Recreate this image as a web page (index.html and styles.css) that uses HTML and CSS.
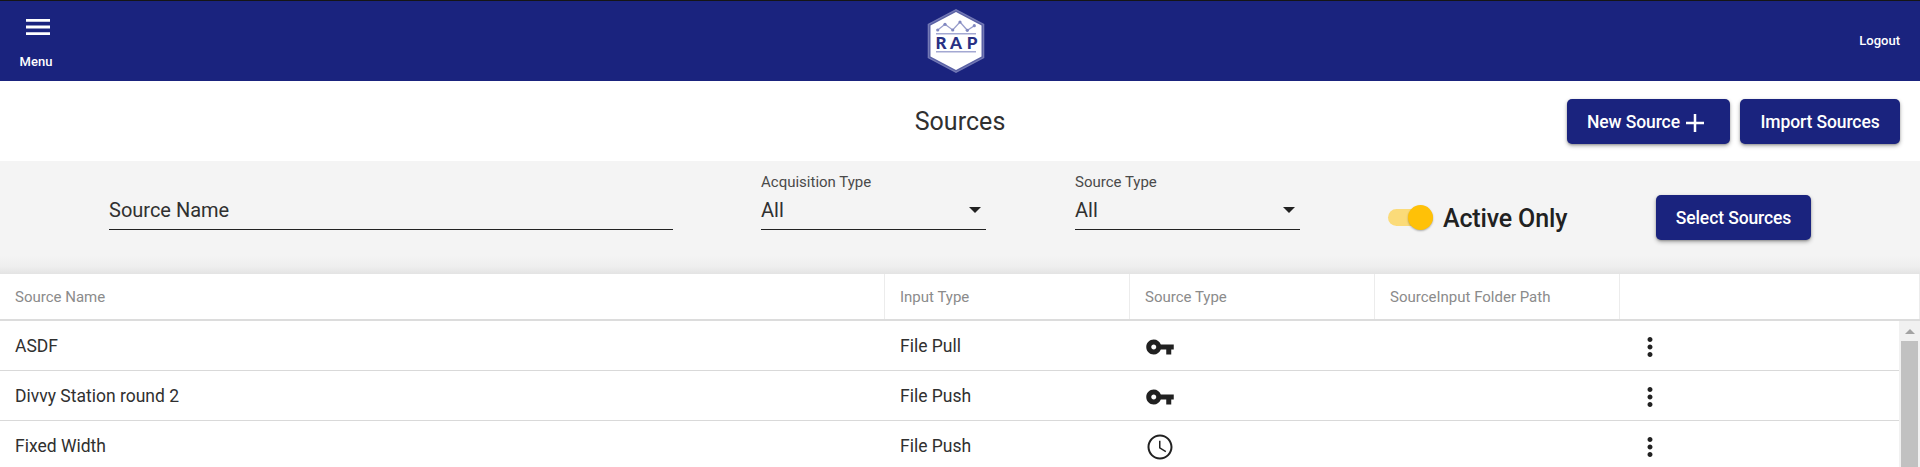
FILE: index.html
```html
<!DOCTYPE html>
<html lang="en">
<head>
<meta charset="utf-8">
<title>Sources</title>
<link rel="stylesheet" href="styles.css">
</head>
<body>
<header class="topbar">
  <button class="menu">
    <svg class="menu-icon" viewBox="0 0 24 16"><path d="M0 0h24v2.8H0zM0 6.6h24v2.8H0zM0 13.2h24V16H0z" fill="#fff"/></svg>
    <span>Menu</span>
  </button>
  <svg class="logo" viewBox="0 0 58 66">
    <path d="M29 1 L57.300 16 V50 L29 65 L0.700 50 V16 Z" fill="#7379b5"/>
    <path d="M29 2.400 L56 16.800 V49.200 L29 63.600 L2 49.200 V16.800 Z" fill="#5a61a5"/>
    <path d="M29 4 L54.500 17.500 V48.500 L29 62 L3.500 48.500 V17.500 Z" fill="#fff"/>
    <path d="M10.700 22 L18 16.300 L25.700 22 L33 14 L40.300 22.300 L47.300 17.700" fill="none" stroke="#989dcb" stroke-width="1.300"/>
    <g fill="#8087c0"><circle cx="10.700" cy="22" r="1.600"/><circle cx="18" cy="16.300" r="1.600"/><circle cx="25.700" cy="22" r="1.600"/><circle cx="33" cy="14" r="1.600"/><circle cx="40.300" cy="22.300" r="1.600"/><circle cx="47.300" cy="17.700" r="1.600"/></g>
    <path d="M9 25h40v1.600H9zM9 43h40v1.600H9z" fill="#a3a8d2"/>
    <g class="logo-text" text-anchor="middle"><text x="14" y="41">R</text><text x="29" y="41">A</text><text x="45" y="41">P</text></g>
  </svg>
  <a class="logout">Logout</a>
</header>
<section class="titlebar">
  <h1>Sources</h1>
  <div class="actions">
    <button class="btn new">New Source <svg class="plus" viewBox="0 0 18 18"><path d="M7.750 0h2.500v7.750H18v2.500h-7.750V18h-2.500v-7.750H0v-2.500h7.750z" fill="#fff"/></svg></button>
    <button class="btn import">Import Sources</button>
  </div>
</section>
<section class="filters">
  <div class="field name"><label></label><div class="control">Source Name</div></div>
  <div class="field select"><label>Acquisition Type</label><div class="control">All<svg class="caret" viewBox="0 0 12 6"><path d="M0 0h12L6 6z" fill="#212121"/></svg></div></div>
  <div class="field select"><label>Source Type</label><div class="control">All<svg class="caret" viewBox="0 0 12 6"><path d="M0 0h12L6 6z" fill="#212121"/></svg></div></div>
  <div class="toggle"><span class="track"><span class="thumb"></span></span><span class="toggle-label">Active Only</span></div>
  <button class="btn selectbtn">Select Sources</button>
</section>
<main class="table">
  <div class="row head"><div>Source Name</div><div>Input Type</div><div>Source Type</div><div>SourceInput Folder Path</div><div></div></div>
  <div class="scroll">
    <div class="rows">
      <div class="row"><div>ASDF</div><div>File Pull</div><div><svg class="icon" viewBox="0 0 24 24"><path d="M12.650 10C11.830 7.670 9.610 6 7 6c-3.310 0-6 2.690-6 6s2.690 6 6 6c2.610 0 4.830-1.670 5.650-4H17v4h4v-4h2v-4H12.650zM7 14c-1.100 0-2-.9-2-2s.9-2 2-2 2 .9 2 2-.9 2-2 2z"/></svg></div><div></div><div><svg class="icon" viewBox="0 0 24 24"><path d="M12 8c1.100 0 2-.9 2-2s-.9-2-2-2-2 .9-2 2 .9 2 2 2zm0 2c-1.100 0-2 .9-2 2s.9 2 2 2 2-.9 2-2-.9-2-2-2zm0 6c-1.100 0-2 .9-2 2s.9 2 2 2 2-.9 2-2-.9-2-2-2z"/></svg></div></div>
      <div class="row"><div>Divvy Station round 2</div><div>File Push</div><div><svg class="icon" viewBox="0 0 24 24"><path d="M12.650 10C11.830 7.670 9.610 6 7 6c-3.310 0-6 2.690-6 6s2.690 6 6 6c2.610 0 4.830-1.670 5.650-4H17v4h4v-4h2v-4H12.650zM7 14c-1.100 0-2-.9-2-2s.9-2 2-2 2 .9 2 2-.9 2-2 2z"/></svg></div><div></div><div><svg class="icon" viewBox="0 0 24 24"><path d="M12 8c1.100 0 2-.9 2-2s-.9-2-2-2-2 .9-2 2 .9 2 2 2zm0 2c-1.100 0-2 .9-2 2s.9 2 2 2 2-.9 2-2-.9-2-2-2zm0 6c-1.100 0-2 .9-2 2s.9 2 2 2 2-.9 2-2-.9-2-2-2z"/></svg></div></div>
      <div class="row"><div>Fixed Width</div><div>File Push</div><div><svg class="icon" viewBox="0 0 24 24"><path fill-rule="evenodd" d="M11.990 2C6.470 2 2 6.480 2 12s4.470 10 9.990 10C17.520 22 22 17.520 22 12S17.520 2 11.990 2zM12 20.400c-4.640 0-8.400-3.760-8.400-8.400S7.360 3.600 12 3.600s8.400 3.760 8.400 8.400-3.760 8.400-8.400 8.400z"/><path d="M12.400 7H11.200v6l5.150 3.100.6-.95-4.550-2.750z"/></svg></div><div></div><div><svg class="icon" viewBox="0 0 24 24"><path d="M12 8c1.100 0 2-.9 2-2s-.9-2-2-2-2 .9-2 2 .9 2 2 2zm0 2c-1.100 0-2 .9-2 2s.9 2 2 2 2-.9 2-2-.9-2-2-2zm0 6c-1.100 0-2 .9-2 2s.9 2 2 2 2-.9 2-2-.9-2-2-2z"/></svg></div></div>
    </div>
    <div class="scrollbar"><svg class="up" viewBox="0 0 10 5"><path d="M0 5h10L5 0z" fill="#a3a3a3"/></svg><div class="bar"></div></div>
  </div>
</main>
</body>
</html>
```

FILE: styles.css
```css
* { box-sizing: border-box; }
body { margin: 0; width: 1920px; height: 467px; overflow: hidden; display: flex; flex-direction: column; font-family: Roboto, sans-serif; font-weight: 400; color: #303030; background: #fff; }
button { font: inherit; border: 0; margin: 0; }
svg { display: block; flex: none; }
.topbar { height: 81px; flex: none; border-top: 1px solid #151515; background: #1a237e; display: grid; grid-template-columns: 909px 58px 1fr; padding: 0 20px 0 18px; color: #fff; font-size: 13px; font-weight: 500; }
.menu { justify-self: start; width: 36px; padding: 18px 0 0; background: none; color: #fff; display: flex; flex-direction: column; align-items: center; gap: 19px; line-height: 16px; font-weight: 500; text-align: center; }
.menu-icon { width: 24px; height: 16px; margin-left: 4px; }
.logo { width: 58px; height: 66px; margin-top: 7px; }
.logo-text { font: 900 17px Lato, sans-serif; fill: #293184; }
.logout { justify-self: end; align-self: center; line-height: 16px; }
.titlebar { height: 80px; flex: none; display: grid; grid-template-columns: 1fr auto 1fr; align-items: center; padding: 0 20px; }
h1 { grid-column: 2; margin: 0; padding-top: 2px; font-size: 25px; font-weight: 400; letter-spacing: .05px; line-height: 30px; }
.actions { justify-self: end; display: flex; gap: 10px; padding-top: 1px; }
.btn { height: 45px; border-radius: 5px; background: #1a237e; color: #fff; font-size: 17.500px; font-weight: 500; letter-spacing: -.1px; display: flex; align-items: center; justify-content: center; padding: 0; white-space: nowrap; box-shadow: 0 2px 4px rgba(0,0,0,.3), 0 1px 2px rgba(0,0,0,.2); }
.new { width: 163px; gap: 6px; justify-content: flex-start; padding-left: 20px; }
.plus { width: 18px; height: 18px; margin-top: 3px; }
.import { width: 160px; }
.filters { height: 113px; flex: none; display: flex; align-items: flex-start; background: linear-gradient(#f4f4f4 95px, #efefef 105px, #e3e3e3); padding-left: 109px; }
.field { display: flex; flex-direction: column; padding-top: 11px; }
.field label { height: 20px; font-size: 15px; line-height: 20px; color: #4a4a4a; }
.control { height: 38px; border-bottom: 1px solid #212121; display: flex; align-items: center; justify-content: space-between; font-size: 20px; line-height: 24px; padding: 0 5px 1px 0; }
.name { width: 564px; margin-right: 88px; }
.select { width: 225px; margin-right: 89px; }
.select + .toggle { margin-left: -1px; }
.caret { width: 12px; height: 6px; }
.toggle { height: 45px; margin-top: 34px; display: flex; align-items: center; gap: 10px; width: 268px; color: #212121; }
.track { width: 45px; height: 17px; border-radius: 9px; background: #fbdb79; display: flex; justify-content: flex-end; align-items: center; }
.thumb { width: 25px; height: 25px; flex: none; border-radius: 50%; background: #ffc107; box-shadow: 0 1px 2px rgba(0,0,0,.3); }
.toggle-label { font-size: 25px; font-weight: 500; letter-spacing: -.15px; white-space: nowrap; padding-top: 1px; }
.selectbtn { width: 155px; margin-top: 34px; }
.table { flex: 1; display: flex; flex-direction: column; min-height: 0; }
.row { display: grid; grid-template-columns: 885px 245px 245px 245px 1fr; height: 50px; border-bottom: 1px solid #d9d9d9; font-size: 17.500px; }
.row > div { padding-left: 15px; display: flex; align-items: center; }
.head { height: 47px; flex: none; border-bottom: 2px solid #dcdcdc; font-size: 15px; color: #8b8b8b; }
.head > div { border-right: 1px solid #ececec; }
.scroll { flex: 1; display: flex; min-height: 0; overflow: hidden; }
.rows { width: 1899px; flex: none; }
.icon { width: 30px; height: 30px; fill: #212121; margin-top: 3px; }
.scrollbar { width: 21px; background: #f1f1f1; display: flex; flex-direction: column; align-items: center; padding-top: 8px; gap: 7px; }
.up { width: 10px; height: 5px; }
.bar { width: 17px; flex: 1; background: #c1c1c1; }
```
